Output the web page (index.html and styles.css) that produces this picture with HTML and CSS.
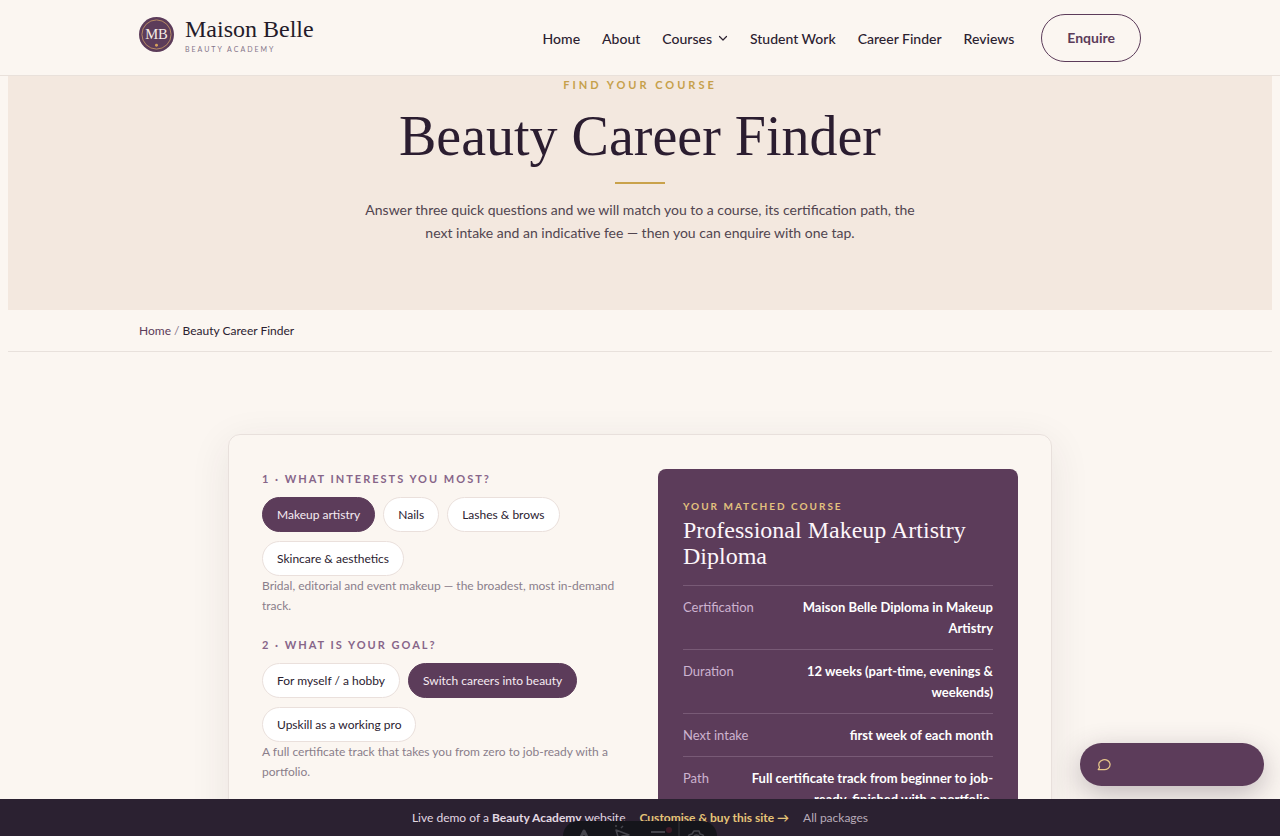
FILE: index.html
```html
<!DOCTYPE html>
<html lang="en">
<head>
<meta charset="utf-8">
<meta name="viewport" content="width=device-width, initial-scale=1">
<title>Beauty Career Finder – Maison Belle</title>
<link rel="stylesheet" href="styles.css">
</head>
<body>
<header class="site-header">
  <div class="container header-row">
    <a class="brand" href="#">
      <svg class="brand-mark" viewBox="0 0 36 36" aria-hidden="true">
        <circle cx="18" cy="18" r="18" fill="#5c3c5a"/>
        <circle cx="18" cy="18" r="15" fill="none" stroke="#b98b63" stroke-width="1"/>
        <text x="18" y="22.5" text-anchor="middle" class="monogram">MB</text>
        <circle cx="18" cy="29" r="1.5" fill="#d9a45c"/>
      </svg>
      <span class="brand-text">
        <span class="brand-name">Maison Belle</span>
        <span class="brand-sub">Beauty Academy</span>
      </span>
    </a>
    <nav class="nav" aria-label="Main">
      <a href="#">Home</a>
      <a href="#">About</a>
      <a href="#" class="has-menu">Courses
        <svg class="chevron" viewBox="0 0 10 10" aria-hidden="true"><path d="M1.500 3.500 5 7 8.500 3.500" fill="none" stroke="currentColor" stroke-width="1.200" stroke-linecap="round" stroke-linejoin="round"/></svg>
      </a>
      <a href="#">Student Work</a>
      <a href="#">Career Finder</a>
      <a href="#">Reviews</a>
      <a href="#" class="enquire">Enquire</a>
    </nav>
  </div>
</header>

<main class="page">
  <section class="hero">
    <p class="eyebrow">Find your course</p>
    <h1>Beauty Career Finder</h1>
    <div class="rule"></div>
    <p class="lead">Answer three quick questions and we will match you to a course, its certification path, the next intake and an indicative fee — then you can enquire with one tap.</p>
  </section>

  <nav class="crumbs" aria-label="Breadcrumb">
    <div class="container"><a href="#">Home</a> <span class="sep">/</span> <span>Beauty Career Finder</span></div>
  </nav>

  <section class="finder">
    <div class="questions">
      <div class="question">
        <h2>1 · What interests you most?</h2>
        <div class="chips">
          <button type="button" class="chip selected" aria-pressed="true">Makeup artistry</button>
          <button type="button" class="chip" aria-pressed="false">Nails</button>
          <button type="button" class="chip" aria-pressed="false">Lashes &amp; brows</button>
          <button type="button" class="chip" aria-pressed="false">Skincare &amp; aesthetics</button>
        </div>
        <p class="hint">Bridal, editorial and event makeup — the broadest, most in-demand track.</p>
      </div>
      <div class="question">
        <h2>2 · What is your goal?</h2>
        <div class="chips">
          <button type="button" class="chip" aria-pressed="false">For myself / a hobby</button>
          <button type="button" class="chip selected" aria-pressed="true">Switch careers into beauty</button>
          <button type="button" class="chip" aria-pressed="false">Upskill as a working pro</button>
        </div>
        <p class="hint">A full certificate track that takes you from zero to job-ready with a portfolio.</p>
      </div>
    </div>
    <aside class="match">
      <p class="match-label">Your matched course</p>
      <h3>Professional Makeup Artistry Diploma</h3>
      <dl class="facts">
        <div class="fact"><dt>Certification</dt><dd>Maison Belle Diploma in Makeup Artistry</dd></div>
        <div class="fact"><dt>Duration</dt><dd>12 weeks (part-time, evenings &amp; weekends)</dd></div>
        <div class="fact"><dt>Next intake</dt><dd>first week of each month</dd></div>
        <div class="fact"><dt>Path</dt><dd>Full certificate track from beginner to job-ready, finished with a portfolio.</dd></div>
      </dl>
    </aside>
  </section>
</main>

<button type="button" class="chat" aria-label="Chat">
  <svg viewBox="0 0 24 24" aria-hidden="true"><path d="M2 20q2-2 2-4a9 8 0 1 1 6 4z" fill="none" stroke="#e6c68a" stroke-width="2" stroke-linejoin="round"/></svg>
</button>

<footer class="demo-bar">
  <span class="demo-text">Live demo of a <b>Beauty Academy</b> website</span>
  <a class="buy" href="#">Customise &amp; buy this site →</a>
  <a class="all" href="#">All packages</a>
</footer>

<div class="dock" aria-hidden="true">
  <svg viewBox="0 0 154 32">
    <g fill="none" stroke="#45454c" stroke-width="2" stroke-linejoin="round">
      <path d="M16 20l5-10 5 10M18 17h6" stroke-width="3"/>
      <path d="M53 9l3 10 3-4 7-1-13-5zM53 6v-2M58 7l2-2" stroke-width="1.500"/>
      <path d="M88 11h14M91 16h11"/>
      <path d="M131 10h5l1 3 3 1 2 4-3 3h-12l-3-3 2-4 3-1z" stroke-width="1.500"/>
      <circle cx="133.500" cy="17" r="3" stroke-width="1.500"/>
    </g>
    <circle cx="106" cy="9" r="3" fill="#3d1a27"/>
    <path d="M116 0v32" stroke="#34343a"/>
  </svg>
</div>
</body>
</html>
```
FILE: styles.css
```css
* { box-sizing: border-box; }
body {
  margin: 0;
  height: 100vh;
  overflow: hidden;
  display: flex;
  flex-direction: column;
  position: relative;
  background: #fbf6f1;
  color: #2b2130;
  font-family: Lato, "Open Sans", sans-serif;
  font-size: 14px;
}
a { color: inherit; text-decoration: none; }
h1, h2, h3, p, dl, dd { margin: 0; }
button { font: inherit; cursor: pointer; }
.container { width: 100%; max-width: 1002px; margin: 0 auto; }

.site-header { flex: none; border-bottom: 1px solid #e9e1db; padding: 14px 16px 13px; }
.header-row { display: flex; align-items: center; justify-content: space-between; }
.brand { display: flex; align-items: center; gap: 11px; }
.brand-mark { width: 35px; height: 35px; margin-bottom: 8px; }
.monogram { font: 15px "Liberation Serif", serif; fill: #f6ece6; }
.brand-text { display: flex; flex-direction: column; margin-bottom: 6px; }
.brand-name { font: 24px/28px "Liberation Serif", serif; color: #241b29; }
.brand-sub { font-size: 7px; line-height: 12px; letter-spacing: 2px; text-transform: uppercase; color: #85758a; }
.nav { display: flex; align-items: center; gap: 22px; line-height: 19px; font-weight: 500; white-space: nowrap; }
.has-menu { display: flex; align-items: center; gap: 6px; }
.chevron { width: 10px; height: 10px; }
.enquire {
  margin-left: 5px;
  padding: 0 25px;
  line-height: 46px;
  border: 1px solid #5c3c5a;
  border-radius: 24px;
  color: #5c3c5a;
  font-weight: 700;
}

.page { flex: 1; min-height: 0; overflow: hidden; padding: 0 8px; }
.hero { background: #f3e8df; text-align: center; padding-bottom: 66px; }
.eyebrow { font-size: 11px; line-height: 17px; font-weight: 700; letter-spacing: 3px; text-transform: uppercase; color: #c6a04b; }
h1 { font: 56px/64px "Liberation Serif", serif; margin-top: 11px; color: #2b1d30; }
.rule { width: 50px; height: 2px; margin: 14px auto; background: #c9a24b; }
.lead { max-width: 564px; margin: 0 auto; font-size: 14px; line-height: 23px; color: #51454f; }

.crumbs { font-size: 12px; line-height: 41px; border-bottom: 1px solid #e8e1dc; }
.crumbs a { color: #5c3c5a; }
.sep { color: #85758a; }

.finder {
  max-width: 824px;
  margin: 82px auto;
  padding: 34px 33px;
  display: grid;
  grid-template-columns: 1fr 1fr;
  gap: 36px;
  border: 1px solid #e8e0dc;
  border-radius: 12px;
  box-shadow: 0 10px 40px rgba(60, 40, 60, .09);
}
.questions { display: flex; flex-direction: column; gap: 19px; }
h2 { font-size: 11px; line-height: 19px; letter-spacing: 2px; text-transform: uppercase; color: #876589; }
.chips { display: flex; flex-wrap: wrap; gap: 9px 8px; margin-top: 9px; }
.chip {
  padding: 0 14px;
  font-size: 12px;
  line-height: 33px;
  color: #2b2130;
  background: #fff;
  border: 1px solid #eae0dc;
  border-radius: 18px;
}
.chip.selected { color: #f6ebf2; background: #5c3c5a; border-color: #5c3c5a; }
.hint { font-size: 12px; line-height: 20px; color: #8a7e8b; }

.match { background: #5c3c5a; color: #fff; border-radius: 8px; padding: 26px 25px; }
.match-label { font-size: 10px; line-height: 22px; font-weight: 700; letter-spacing: 2px; text-transform: uppercase; color: #e3c27e; }
h3 { font: 24px/26px "Liberation Serif", serif; color: #fdf6fa; }
.facts { margin-top: 16px; font-size: 13px; line-height: 21px; }
.fact { display: flex; justify-content: space-between; gap: 16px; padding: 11px 0 10px; border-top: 1px solid #785a76; }
dt { flex: none; color: #cdb3d0; }
dd { max-width: 250px; text-align: right; font-weight: 700; }

.chat {
  position: absolute;
  right: 16px;
  bottom: 50px;
  width: 184px;
  height: 43px;
  padding: 0 17px;
  display: flex;
  align-items: center;
  background: #5c3c5a;
  border: 0;
  border-radius: 22px;
  box-shadow: 0 8px 28px rgba(60, 40, 60, .3);
}
.chat svg { width: 15px; height: 15px; }

.demo-bar {
  flex: none;
  z-index: 1;
  display: flex;
  justify-content: center;
  gap: 14px;
  background: #2b2131;
  font-size: 12px;
  line-height: 37px;
  color: #e2d8e2;
}
.buy { color: #e5c478; font-weight: 700; }
.all { color: #b8abb9; }
.dock {
  position: absolute;
  z-index: 2;
  left: 50%;
  bottom: 0;
  width: 154px;
  height: 15px;
  margin-left: -77px;
  overflow: hidden;
  background: #15151b;
  border-radius: 15px 15px 0 0;
}
.dock svg { display: block; width: 154px; height: 32px; }
```
